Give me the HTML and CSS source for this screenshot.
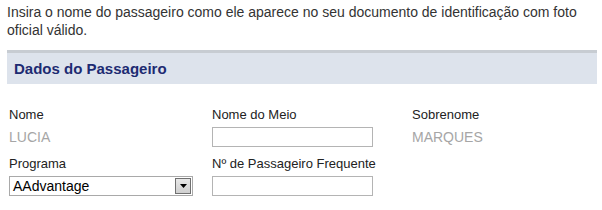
FILE: index.html
```html
<!DOCTYPE html>
<html lang="pt">
<head>
<meta charset="utf-8">
<link rel="stylesheet" href="styles.css">
</head>
<body>
<p class="intro">Insira o nome do passageiro como ele aparece no seu documento de identificação com foto oficial válido.</p>
<section class="panel">
  <h2 class="panel-title">Dados do Passageiro</h2>
  <div class="fields">
    <div class="field">
      <div class="label">Nome</div>
      <div class="value">LUCIA</div>
    </div>
    <div class="field">
      <div class="label">Nome do Meio</div>
      <div class="input"></div>
    </div>
    <div class="field">
      <div class="label">Sobrenome</div>
      <div class="value">MARQUES</div>
    </div>
    <div class="field">
      <div class="label">Programa</div>
      <div class="select"><span class="select-text">AAdvantage</span><span class="select-btn"><svg width="7" height="4" viewBox="0 0 7 4"><path d="M0 0h7L3.5 4z" fill="#000"/></svg></span></div>
    </div>
    <div class="field">
      <div class="label">Nº de Passageiro Frequente</div>
      <div class="input"></div>
    </div>
  </div>
</section>
</body>
</html>
```
FILE: styles.css
```css
html, body {
  margin: 0;
  padding: 0;
  background: #fff;
}
body {
  font-family: "Liberation Sans", Arial, sans-serif;
  color: #222;
  width: 602px;
}
.intro {
  margin: 0;
  padding: 3px 7px 0 7px;
  font-size: 14px;
  line-height: 18px;
  color: #333;
}
.panel {
  margin: 11px 5px 0 7px;
}
.panel-title {
  margin: 0;
  border-top: 3px solid #c7ccd2;
  background: #dde3ec;
  height: 31px;
  box-sizing: content-box;
  padding: 0 0 0 7px;
  font-size: 15px;
  line-height: 31px;
  font-weight: bold;
  color: #1d2b72;
}
.fields {
  display: grid;
  grid-template-columns: 203px 200px 1fr;
  row-gap: 9px;
  padding: 23px 0 0 2px;
}
.field {
  display: flex;
  flex-direction: column;
}
.label {
  font-size: 13px;
  line-height: 16px;
  height: 16px;
  margin-bottom: 4px;
  color: #222;
}
.value {
  font-size: 14px;
  line-height: 20px;
  height: 20px;
  color: #a6a6a6;
}
.input {
  width: 161px;
  height: 20px;
  box-sizing: border-box;
  border: 1px solid #b4b4b4;
  background: #fff;
}
.select {
  display: flex;
  align-items: center;
  width: 184px;
  height: 20px;
  box-sizing: border-box;
  border: 1px solid #a9a9a9;
  padding: 1px;
}
.select-text {
  flex: 1;
  font-size: 14px;
  padding-left: 2px;
  color: #000;
}
.select-btn {
  display: flex;
  align-items: center;
  justify-content: center;
  width: 16px;
  height: 16px;
  box-sizing: border-box;
  border: 1px solid #707070;
  background: linear-gradient(#e8e8e8, #cfcfcf);
}
```
